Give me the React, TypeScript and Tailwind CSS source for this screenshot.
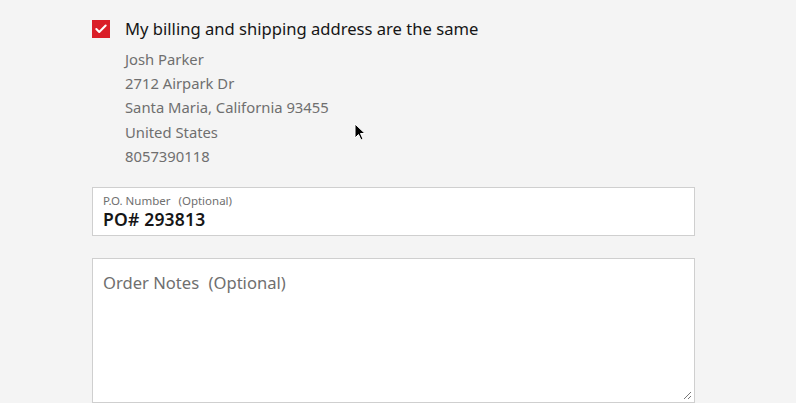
import { Check } from "lucide-react";

export default function App() {
  const address = [
    "Josh Parker",
    "2712 Airpark Dr",
    "Santa Maria, California 93455",
    "United States",
    "8057390118",
  ];

  return (
    <div
      className="relative h-[403px] w-[796px] overflow-hidden bg-[#f4f4f4] pl-[92px] pt-[20px]"
      style={{ fontFamily: '"Noto Sans", "Open Sans", sans-serif' }}
    >
      <div className="flex w-[603px] flex-col">
        <label className="flex items-center gap-[15px]">
          <span className="flex h-[18px] w-[18px] items-center justify-center bg-[#da1e28]">
            <Check className="h-[14px] w-[14px] text-white" strokeWidth={3.5} />
          </span>
          <span className="text-[16.6px] leading-[18px] text-[#161616]">
            My billing and shipping address are the same
          </span>
        </label>

        <div className="mt-[9px] flex flex-col pl-[33px]">
          {address.map((line) => (
            <div key={line} className="text-[14.8px] leading-[24.2px] text-[#6f6f6f]">
              {line}
            </div>
          ))}
        </div>

        <div className="mt-[19px] flex h-[49px] flex-col border border-[#cfcfcf] bg-white px-[10px] pt-[6px]">
          <div className="text-[11.5px] leading-[14px] text-[#6f6f6f]">
            P.O. Number <span className="ml-[5px]">(Optional)</span>
          </div>
          <div className="text-[17.5px] font-semibold leading-[22px] tracking-[0.2px] text-[#161616]">
            PO# 293813
          </div>
        </div>

        <div className="relative mt-[22px] h-[145px] border border-[#cfcfcf] bg-white px-[10px] pt-[13px]">
          <div className="text-[16.6px] leading-[22px] text-[#6f6f6f]">
            Order Notes <span className="ml-[5px]">(Optional)</span>
          </div>
          <svg
            className="absolute bottom-[2px] right-[2px]"
            width="9"
            height="9"
            viewBox="0 0 9 9"
          >
            <path d="M8 1L1 8M8 5L5 8" stroke="#777" strokeWidth="1" />
          </svg>
        </div>
      </div>

      <svg
        className="absolute left-[354px] top-[123px]"
        width="13"
        height="19"
        viewBox="0 0 13 19"
      >
        <path
          d="M1 1L1 15L4.5 11.5L7 17L9 16L6.5 10.5L11 10.5Z"
          fill="#000"
          stroke="#fff"
          strokeWidth="1"
        />
      </svg>
    </div>
  );
}
